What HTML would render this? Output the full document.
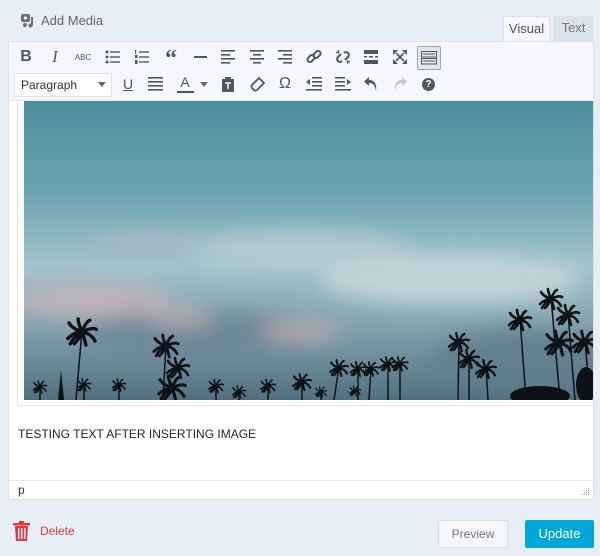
<!DOCTYPE html>
<html><head><meta charset="utf-8"><style>
*{margin:0;padding:0;box-sizing:border-box}
body{width:600px;height:556px;background:#e8eef5;font-family:"Liberation Sans",sans-serif;position:relative;overflow:hidden;color:#555d66}
.abs{position:absolute}
.ic{position:absolute;width:22px;height:22px;display:flex;align-items:center;justify-content:center;font-size:15px;color:#50575e}
</style></head><body>
<div class="abs" style="left:21px;top:13px;width:15px;height:15px">
<svg width="15" height="15" viewBox="0 0 15 15"><rect x="0" y="1" width="9" height="8" rx="2" fill="#6b7178"/><circle cx="4.5" cy="5" r="1.6" fill="#e8eef5"/><path d="M11 4v8.5" stroke="#6b7178" stroke-width="2"/><circle cx="9.5" cy="12.5" r="2" fill="#6b7178"/><circle cx="4" cy="12" r="2" fill="#6b7178"/></svg></div>
<div class="abs" style="left:41px;top:13px;font-size:13px;color:#666">Add Media</div>
<div class="abs" style="left:503px;top:16px;width:47px;height:26px;background:#f5f7fa;border:1px solid #dbe1e7;border-bottom:none;font-size:13px;color:#555;text-align:center;line-height:24px">Visual</div>
<div class="abs" style="left:553px;top:16px;width:41px;height:25px;background:#dbe3ea;font-size:13px;color:#777;text-align:center;line-height:24px">Text</div>
<div class="abs" style="left:8px;top:41px;width:586px;height:459px;background:#fff;border:1px solid #dde2e7"></div>
<div class="abs" style="left:9px;top:42px;width:584px;height:59px;background:#f5f7fa;border-bottom:1px solid #e4e8ec"></div>
<div class="ic" style="left:15px;top:46px;font-weight:bold;font-size:16px">B</div>
<div class="ic" style="left:44px;top:46px;font-style:italic;font-size:17px;font-family:'Liberation Serif',serif">I</div>
<div class="ic" style="left:72px;top:46px;font-size:8px">ABC</div>
<svg class="abs" style="left:105px;top:50px" width="16" height="14"><g fill="#50575e"><circle cx="2" cy="2" r="1.5"/><circle cx="2" cy="7" r="1.5"/><circle cx="2" cy="12" r="1.5"/><rect x="5" y="1.3" width="10" height="1.4"/><rect x="5" y="6.3" width="10" height="1.4"/><rect x="5" y="11.3" width="10" height="1.4"/></g></svg>
<svg class="abs" style="left:134px;top:49px" width="16" height="16"><g fill="#50575e"><rect x="5" y="2.3" width="10" height="1.4"/><rect x="5" y="7.3" width="10" height="1.4"/><rect x="5" y="12.3" width="10" height="1.4"/><rect x="1" y="1" width="1.2" height="4"/><rect x="1" y="6" width="2.5" height="3"/><rect x="1" y="11" width="2.5" height="4"/></g></svg>
<div class="ic" style="left:160px;top:48px;font-size:24px;font-weight:bold;font-family:'Liberation Serif',serif">“</div>
<div class="abs" style="left:194px;top:56px;width:13px;height:2px;background:#50575e"></div>
<svg class="abs" style="left:221px;top:50px" width="15" height="14"><g fill="#50575e"><rect x="0" y="0" width="14" height="1.6"/><rect x="0" y="4" width="9" height="1.6"/><rect x="0" y="8" width="14" height="1.6"/><rect x="0" y="12" width="9" height="1.6"/></g></svg>
<svg class="abs" style="left:250px;top:50px" width="15" height="14"><g fill="#50575e"><rect x="0" y="0" width="14" height="1.6"/><rect x="3" y="4" width="8" height="1.6"/><rect x="0" y="8" width="14" height="1.6"/><rect x="3" y="12" width="8" height="1.6"/></g></svg>
<svg class="abs" style="left:278px;top:50px" width="15" height="14"><g fill="#50575e"><rect x="0" y="0" width="14" height="1.6"/><rect x="5" y="4" width="9" height="1.6"/><rect x="0" y="8" width="14" height="1.6"/><rect x="5" y="12" width="9" height="1.6"/></g></svg>
<svg class="abs" style="left:306px;top:49px" width="16" height="16"><g fill="none" stroke="#50575e" stroke-width="2"><rect x="1" y="7" width="8" height="5" rx="2.5" transform="rotate(-45 5 9.5)"/><rect x="7" y="3" width="8" height="5" rx="2.5" transform="rotate(-45 11 5.5)"/></g></svg>
<svg class="abs" style="left:335px;top:49px" width="16" height="16"><g fill="none" stroke="#50575e" stroke-width="2"><path d="M6 5L3 8a2.5 2.5 0 0 0 4 4"/><path d="M10 11l3-3a2.5 2.5 0 0 0-4-4"/><path d="M1 3l3 1M3 1l1 3M15 13l-3-1M13 15l-1-3" stroke-width="1.2"/></g></svg>
<svg class="abs" style="left:364px;top:50px" width="15" height="14"><g fill="#50575e"><rect x="0" y="0" width="14" height="4"/><rect x="0" y="6" width="3" height="1.5"/><rect x="5" y="6" width="4" height="1.5"/><rect x="11" y="6" width="3" height="1.5"/><rect x="0" y="10" width="14" height="4"/></g></svg>
<svg class="abs" style="left:393px;top:50px" width="14" height="14"><g stroke="#50575e" stroke-width="1.6" fill="#50575e"><path d="M3 3l8 8M11 3l-8 8"/><path d="M0 0h5L0 5z M14 0v5L9 0z M0 14v-5l5 5z M14 14h-5l5-5z" stroke="none"/></g></svg>
<div class="abs" style="left:417px;top:46px;width:24px;height:24px;background:#e5e8eb;border:1px solid #a0a5aa;border-radius:2px"></div>
<svg class="abs" style="left:421px;top:51px" width="16" height="14"><g fill="none" stroke="#50575e" stroke-width="1"><rect x="0.5" y="0.5" width="15" height="5.5"/><rect x="0.5" y="7.5" width="15" height="5.5"/></g><g fill="#50575e"><rect x="2" y="2.5" width="12" height="1"/><rect x="2" y="9.5" width="12" height="1"/></g></svg>
<div class="abs" style="left:14px;top:73px;width:98px;height:24px;background:#fff;border:1px solid #dde2e7;font-size:12px;color:#333;padding:4px 0 0 6px">Paragraph</div>
<div class="abs" style="left:98px;top:82px;width:0;height:0;border-left:4px solid transparent;border-right:4px solid transparent;border-top:5px solid #666"></div>
<div class="ic" style="left:117px;top:73px;text-decoration:underline;font-size:14px">U</div>
<svg class="abs" style="left:148px;top:77px" width="15" height="14"><g fill="#50575e"><rect y="0" width="15" height="1.6"/><rect y="4" width="15" height="1.6"/><rect y="8" width="15" height="1.6"/><rect y="12" width="15" height="1.6"/></g></svg>
<div class="ic" style="left:174px;top:71px;font-size:14px">A</div>
<div class="abs" style="left:177px;top:91px;width:17px;height:2px;background:#50575e"></div>
<div class="abs" style="left:200px;top:82px;border-left:4px solid transparent;border-right:4px solid transparent;border-top:5px solid #666"></div>
<svg class="abs" style="left:221px;top:76px" width="14" height="16"><path d="M1 3h12v13H1z" fill="#50575e"/><rect x="4" y="1" width="6" height="4" fill="#50575e"/><path d="M4 7h6M7 7v6" stroke="#f5f7fa" stroke-width="1.6"/></svg>
<svg class="abs" style="left:250px;top:77px" width="15" height="15"><path d="M9 1l5 5-7 7a2.1 2.1 0 0 1-3 0L2 11a2.1 2.1 0 0 1 0-3z" fill="none" stroke="#50575e" stroke-width="1.8"/></svg>
<div class="ic" style="left:274px;top:73px;font-size:16px">Ω</div>
<svg class="abs" style="left:306px;top:77px" width="16" height="15"><g fill="#50575e"><rect x="6" y="0" width="10" height="1.6"/><rect x="6" y="4" width="10" height="1.6"/><rect x="6" y="8" width="10" height="1.6"/><rect x="0" y="12" width="16" height="1.6"/><path d="M0 5l4-3v6z"/></g></svg>
<svg class="abs" style="left:335px;top:77px" width="16" height="15"><g fill="#50575e"><rect x="0" y="0" width="10" height="1.6"/><rect x="0" y="4" width="10" height="1.6"/><rect x="0" y="8" width="10" height="1.6"/><rect x="0" y="12" width="16" height="1.6"/><path d="M16 5l-4-3v6z"/></g></svg>
<svg class="abs" style="left:363px;top:76px" width="16" height="16"><path d="M6 1L1 5.5 6 10V7c4 0 6 2 7 8 1-6-1-11-7-11z" fill="#50575e"/></svg>
<svg class="abs" style="left:392px;top:76px" width="16" height="16"><path d="M10 1l5 4.5L10 10V7c-4 0-6 2-7 8-1-6 1-11 7-11z" fill="#c5c9cd"/></svg>
<div class="abs" style="left:422px;top:78px;width:13px;height:13px;border-radius:50%;background:#50575e;color:#fff;font-size:10px;font-weight:bold;text-align:center;line-height:13px">?</div>
<div class="abs" style="left:17px;top:101px;width:577px;height:305px;border:1px solid #e2e5e8;border-top:none;border-right:none"></div>
<svg class="abs" style="left:24px;top:101px" width="569" height="299" viewBox="24 101 569 299">
<defs>
<linearGradient id="s" x1="0" y1="0" x2="0" y2="1"><stop offset="0" stop-color="#4b8e9f"/><stop offset=".3" stop-color="#6aa3b0"/><stop offset=".55" stop-color="#a3c3ca"/><stop offset=".78" stop-color="#7f9daa"/><stop offset="1" stop-color="#526f7e"/></linearGradient>
<filter id="b"><feGaussianBlur stdDeviation="10"/></filter>
<g id="p" fill="none" stroke="#0d1216" stroke-linecap="round"><path stroke-width="2.6" d="M0 0Q-6 0-11 5M0 0Q-8-3-10-7M0 0Q-3-7-3-10M0 0Q3-8 6-9M0 0Q8-4 11-2M0 0Q7 1 10 7M0 0Q-2 5-6 9M0 0Q2 5 3 10M0 0Q-6 3-9 9"/><circle r="3.5" fill="#0d1216" stroke="none"/></g>
</defs>
<rect x="24" y="101" width="569" height="299" fill="url(#s)"/>
<g filter="url(#b)" opacity=".85">
<ellipse cx="150" cy="245" rx="60" ry="14" fill="#a9b9c6"/>
<ellipse cx="300" cy="250" rx="110" ry="20" fill="#b7cbd2"/>
<ellipse cx="90" cy="300" rx="80" ry="18" fill="#c4b4bc"/>
<ellipse cx="450" cy="280" rx="130" ry="25" fill="#c8d8dc"/>
<ellipse cx="200" cy="335" rx="120" ry="25" fill="#6d8595"/>
<ellipse cx="520" cy="360" rx="90" ry="30" fill="#627e8c"/>
<ellipse cx="300" cy="332" rx="40" ry="8" fill="#c7b0b5"/>
<ellipse cx="180" cy="318" rx="35" ry="7" fill="#c7b0b5"/>
</g>
<g stroke="#0d1216" stroke-width="1.5" fill="none">
<path d="M82 330L76 400M40 387V400M84 385V400M119 385V400M166 345L163 400M216 385V400M239 392V400M268 385V400M302 382V400M321 392V400M339 367L334 400M358 368V400M371 368L369 400M388 363V400M400 363V400M459 340L458 400M469 358V400M486 367L488 400M520 318L526 400M551 297L560 400M568 313L575 400M585 340L590 400"/>
</g>
<use href="#p" transform="translate(82 332) scale(1.3)"/>
<use href="#p" transform="translate(40 387) scale(.6)"/>
<use href="#p" transform="translate(84 385) scale(.6)"/>
<use href="#p" transform="translate(119 385) scale(.6)"/>
<use href="#p" transform="translate(166 346) scale(1.1)"/>
<use href="#p" transform="translate(178 368) scale(1)"/>
<use href="#p" transform="translate(172 388) scale(1.2)"/>
<use href="#p" transform="translate(216 386) scale(.65)"/>
<use href="#p" transform="translate(239 392) scale(.6)"/>
<use href="#p" transform="translate(268 386) scale(.65)"/>
<use href="#p" transform="translate(302 382) scale(.8)"/>
<use href="#p" transform="translate(321 392) scale(.5)"/>
<use href="#p" transform="translate(339 368) scale(.8)"/>
<use href="#p" transform="translate(358 369) scale(.7)"/>
<use href="#p" transform="translate(371 369) scale(.7)"/>
<use href="#p" transform="translate(388 364) scale(.7)"/>
<use href="#p" transform="translate(400 364) scale(.7)"/>
<use href="#p" transform="translate(355 391) scale(.5)"/>
<use href="#p" transform="translate(459 342) scale(.9)"/>
<use href="#p" transform="translate(469 359) scale(.9)"/>
<use href="#p" transform="translate(486 369) scale(.9)"/>
<use href="#p" transform="translate(520 320) scale(1)"/>
<use href="#p" transform="translate(551 299) scale(1)"/>
<use href="#p" transform="translate(568 315) scale(1)"/>
<use href="#p" transform="translate(559 343) scale(1.2)"/>
<use href="#p" transform="translate(585 342) scale(1.1)"/>
<path d="M58 400l3-30 3 30z" fill="#0d1216"/>
<ellipse cx="540" cy="396" rx="30" ry="10" fill="#0d1216"/>
<ellipse cx="586" cy="385" rx="10" ry="18" fill="#0d1216"/>
</svg>
<div class="abs" style="left:18px;top:427px;font-size:12px;color:#222">TESTING TEXT AFTER INSERTING IMAGE</div>
<div class="abs" style="left:9px;top:480px;width:584px;height:1px;background:#e4e8ec"></div>
<div class="abs" style="left:18px;top:483px;font-size:12px;color:#333">p</div>
<svg class="abs" style="left:582px;top:488px" width="8" height="8"><g fill="#999"><rect x="6" y="0" width="1" height="1"/><rect x="4" y="2" width="1" height="1"/><rect x="6" y="2" width="1" height="1"/><rect x="2" y="4" width="1" height="1"/><rect x="4" y="4" width="1" height="1"/><rect x="6" y="4" width="1" height="1"/><rect x="0" y="6" width="1" height="1"/><rect x="2" y="6" width="1" height="1"/><rect x="4" y="6" width="1" height="1"/><rect x="6" y="6" width="1" height="1"/></g></svg>
<svg class="abs" style="left:13px;top:521px" width="17" height="20"><g fill="#e0393e"><rect x="0" y="2" width="17" height="2.5"/><rect x="6" y="0" width="5" height="2.5"/><path d="M2 5h13l-1 15H3z"/></g><g fill="#e8eef5"><rect x="5" y="7" width="1.5" height="11"/><rect x="8" y="7" width="1.5" height="11"/><rect x="11" y="7" width="1.5" height="11"/></g></svg>
<div class="abs" style="left:40px;top:524px;font-size:12px;color:#e0393e">Delete</div>
<div class="abs" style="left:438px;top:520px;width:70px;height:28px;background:#f5f7fa;border:1px solid #d8dde2;border-radius:2px;font-size:12px;color:#777;text-align:center;line-height:26px">Preview</div>
<div class="abs" style="left:525px;top:520px;width:69px;height:28px;background:#00a7d8;border-radius:2px;font-size:13px;color:#fff;text-align:center;line-height:28px">Update</div>
</body></html>
